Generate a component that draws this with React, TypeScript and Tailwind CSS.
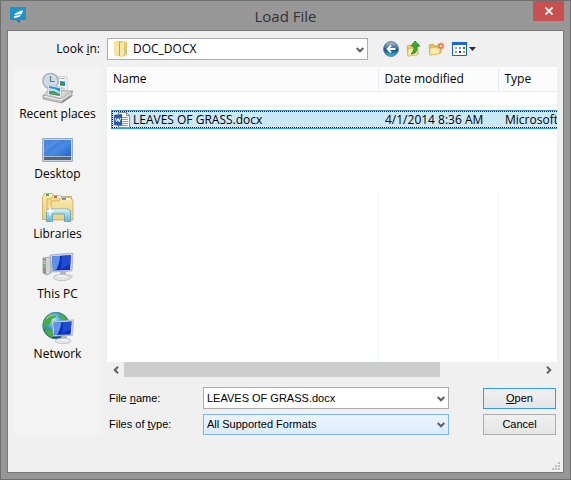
import type { ReactNode } from "react";

const ui = "font-['Open_Sans','Noto_Sans',sans-serif]";
const shell = "font-['Liberation_Sans',Arial,sans-serif]";

function AppLogo() {
  return (
    <svg width="16" height="17" viewBox="0 0 16 17" aria-hidden="true">
      <path d="M0 0h16v13h-6v3l-4-3H0z" fill="#1e93c8" />
      <path d="M6 13h4v3z" fill="#157aaa" />
      <path d="M4 8c1-2 4-3 9-5l-1 4-8 1zM4 9l7-1c-1 2-3 2-7 3z" fill="#fff" />
    </svg>
  );
}

function Chevron({ className = "" }: { className?: string }) {
  return (
    <svg className={className} width="8" height="6" viewBox="0 0 8 6" aria-hidden="true">
      <path d="M.7 1L4 4.300 7.300 1" fill="none" stroke="#606060" strokeWidth="2" />
    </svg>
  );
}

function FolderIcon() {
  return (
    <svg width="14" height="16" viewBox="0 0 14 16" aria-hidden="true">
      <path d="M0 1l6-1 7 1v13l-6 2-7-2z" fill="#e3c163" />
      <path d="M0 1.500L5 1v14l-5-1z" fill="#f6e5a0" />
      <path d="M6 2l4-1v13l-4 2z" fill="#f9e8a5" />
      <path d="M10 1l3 1v12l-3 .5z" fill="#e8c967" />
      <path d="M12.500 9v4" stroke="#92b9b5" />
      <path d="M5.500 1v14" stroke="#cda641" />
    </svg>
  );
}

function BackIcon() {
  return (
    <svg width="16" height="16" viewBox="0 0 16 16" aria-hidden="true">
      <defs>
        <linearGradient id="back" x1="0" y1="0" x2="0" y2="1">
          <stop offset="0" stopColor="#b4c4d4" />
          <stop offset=".4" stopColor="#4a789f" />
          <stop offset=".55" stopColor="#184a7a" />
          <stop offset="1" stopColor="#39c4ee" />
        </linearGradient>
      </defs>
      <circle cx="8" cy="8" r="7.400" fill="url(#back)" stroke="#587998" />
      <path d="M12.500 8H5M8 4.500L4.500 8 8 11.500" fill="none" stroke="#fff" strokeWidth="1.800" />
    </svg>
  );
}

function UpIcon() {
  return (
    <svg width="15" height="16" viewBox="0 0 15 16" aria-hidden="true">
      <path d="M1 5l4-1 1 1 6-1v9L2 15z" fill="#eccb65" stroke="#c7a245" strokeWidth=".7" />
      <path d="M2 8l10-2-1 8-9 1z" fill="#fff0a8" stroke="#d3b150" strokeWidth=".7" />
      <path d="M5 13c2-2 3-4 3-8H5l4-5 5 5h-3c0 5-1 8-6 8z" fill="#39ad36" stroke="#19701d" strokeWidth=".7" />
    </svg>
  );
}

function NewFolderIcon() {
  return (
    <svg width="17" height="16" viewBox="0 0 17 16" aria-hidden="true">
      <path d="M1 4l4-1 1 2 7-1v8L2 14z" fill="#e8bd50" stroke="#cba246" strokeWidth=".7" />
      <path d="M2 7l11-1-2 7-9 1z" fill="#ffebaa" stroke="#d9b553" strokeWidth=".7" />
      <path d="M13 1.500v7M9.500 5h7M10.500 2.500l5 5M15.500 2.500l-5 5" stroke="#e9603a" strokeWidth="1.200" />
      <circle cx="13" cy="5" r="1.500" fill="#ffd49b" />
    </svg>
  );
}

function ViewIcon() {
  return (
    <svg width="25" height="15" viewBox="0 0 25 15" aria-hidden="true">
      <path d="M.5 .5h14v13H.5z" fill="#fff" stroke="#1762bd" />
      <path d="M0 0h15v3H0z" fill="#1768cf" />
      <path d="M3 5h2v2H3z" fill="#a9a9ba" />
      <path d="M7 5h2v2H7z" fill="#8989cc" />
      <path d="M11 5h2v2h-2z" fill="#158621" />
      <path d="M3 9h2v2H3z" fill="#ee7851" />
      <path d="M7 9h2v2H7z" fill="#113b9d" />
      <path d="M11 9h2v2h-2z" fill="#c7a000" />
      <path d="M17 5h7l-3.500 4z" fill="#2d2d2d" />
    </svg>
  );
}

function WordIcon() {
  return (
    <svg width="16" height="16" viewBox="0 0 16 16" aria-hidden="true">
      <path d="M4.500 .5h8l3 3v12h-11z" fill="#fff" stroke="#8b8b8b" />
      <path d="M12.500 .5v3h3" fill="none" stroke="#8b8b8b" />
      <path d="M8 5.500h6M8 7.500h6M8 9.500h6M8 11.500h6M8 13.500h6" stroke="#999" />
      <path d="M0 3l8-1v12l-8-1z" fill="#2b5aa5" />
      <path d="M1.500 6l1 4L4 6.500 5.300 10l1.200-4" fill="none" stroke="#fff" />
    </svg>
  );
}

function RecentIcon() {
  return (
    <svg width="32" height="32" viewBox="0 0 32 32" aria-hidden="true">
      <path d="M12 4l13 1v18l-13-2z" fill="#fafafa" stroke="#b7bcc0" strokeWidth=".7" />
      <path d="M14 6l9 .7M14 9l3 .2M14 11l3 .2M19 16l4 .3M19 18l4 .3" stroke="#adb5b9" />
      <path d="M18 9l5 .5v4l-5-.5z" fill="#298bcc" />
      <path d="M18 12l2-1 3 2v1l-5-.5z" fill="#3c8c43" />
      <circle cx="8.500" cy="9" r="7.500" fill="#d8e4eb" stroke="#a4b5be" strokeWidth="1.700" />
      <circle cx="8.500" cy="9" r="5.600" fill="#cbdce6" />
      <path d="M8.500 4v5.500h4" fill="none" stroke="#6c7c84" strokeWidth="1.200" />
      <path d="M2 23l4-5 25 1-10 11-18-4z" fill="#d5d5d5" stroke="#9a9a9a" strokeWidth=".7" />
      <path d="M6 13l13 2v11L6 23z" fill="#fff" stroke="#b2b9be" strokeWidth=".7" />
      <path d="M7 14l11 2v8L7 22z" fill="#2f91d6" />
      <path d="M7 20l4-1 7 4v1L7 22z" fill="#579a43" />
      <path d="M7 16l6 1 5 3v2l-6-3-5 0z" fill="#b9e2f5" />
      <path d="M1 23l18 4 11-8v5L20 31 1 27z" fill="#c2c2c2" stroke="#858585" strokeWidth=".6" />
      <path d="M2 24l17 4 10-7" fill="none" stroke="#f8f8f8" />
      <path d="M20 30l9-6" stroke="#737373" />
    </svg>
  );
}

function DesktopIcon() {
  return (
    <svg width="32" height="32" viewBox="0 0 32 32" aria-hidden="true">
      <defs>
        <linearGradient id="desk" x1="0" y1="0" x2="1" y2="1">
          <stop offset="0" stopColor="#286bd0" />
          <stop offset=".5" stopColor="#488be5" />
          <stop offset="1" stopColor="#1d56c5" />
        </linearGradient>
      </defs>
      <path d="M.5 6.500h30v23H.5z" fill="#c6d0dc" stroke="#9caab8" />
      <path d="M2 8h27v20H2z" fill="url(#desk)" />
      <path d="M2 8h18C15 11 8 15 2 22z" fill="#7cacf0" opacity=".35" />
      <path d="M2 25h27v3H2z" fill="#51657b" />
      <path d="M2 24.500h27" stroke="#a9bacb" />
    </svg>
  );
}

function LibrariesIcon() {
  return (
    <svg width="32" height="32" viewBox="0 0 32 32" aria-hidden="true">
      <defs>
        <linearGradient id="libraryFolder" x1="0" y1="0" x2="0" y2="1">
          <stop offset="0" stopColor="#fae9ab" />
          <stop offset="1" stopColor="#edcf7c" />
        </linearGradient>
        <linearGradient id="stand" x1="0" y1="0" x2="0" y2="1">
          <stop offset="0" stopColor="#cceefa" />
          <stop offset="1" stopColor="#65b5da" />
        </linearGradient>
      </defs>
      <path d="M.5 5l2-3.500h8l2 3h17v23H.5z" fill="url(#libraryFolder)" stroke="#c9a653" strokeWidth=".8" />
      <path d="M3 2h7v2H3z" fill="#fff" />
      <path d="M4 2h3v2H4z" fill="#35b545" />
      <path d="M5 7h4l2-3.500h8l2 3h9v20H5z" fill="#f5dc91" stroke="#caa34b" strokeWidth=".7" />
      <path d="M11 4h8v2h-8z" fill="#fff" />
      <path d="M12 4h3v2h-3z" fill="#dc563e" />
      <path d="M9 9h8l2-3.500h9l3 3V28H9z" fill="url(#libraryFolder)" stroke="#c9a653" strokeWidth=".8" />
      <path d="M20 6h8v2h-8z" fill="#fff" />
      <path d="M20 6h4v2h-4z" fill="#4fa2df" />
      <path d="M4.500 29.500V20c0-2 1-3 3-3h17c3 0 4 1 4 3v9.500h-6V22h-12v7.500z" fill="url(#stand)" stroke="#579fbe" strokeWidth=".8" />
      <path d="M5.500 20c0-1 1-2 3-2h16" fill="none" stroke="#e8faff" />
      <path d="M8 13l1 5 4 1-4 1-1 5-1-5-4-1 4-1z" fill="#fff" />
    </svg>
  );
}

function Screen() {
  return (
    <>
      <path d="M8 3l23-2-1 18-20 1z" fill="#d1d6dc" stroke="#9aa1aa" strokeWidth=".7" />
      <path d="M10 4.500l19-1.500-1 15-17 .5z" fill="#0d2fc2" />
      <path d="M10 4.500l8-.7c0 6-2 10-4 14.500l-3 .2z" fill="#5e93ec" />
      <path d="M20 3.700L29 3l-.7 9-9.300 5z" fill="#2959d8" opacity=".7" />
      <path d="M18 20l6-.5v4h-6z" fill="#b4b8bd" />
      <ellipse cx="20" cy="25.500" rx="8.500" ry="3.200" fill="#e3e6e8" stroke="#b0b4b8" strokeWidth=".7" />
      <path d="M15 25c3-2 7-1 9 0" fill="none" stroke="#fff" />
    </>
  );
}

function ComputerIcon() {
  return (
    <svg width="32" height="32" viewBox="0 0 32 32" aria-hidden="true">
      <path d="M1 6l8-1v16l-4 2-4-2z" fill="#cfd3d5" stroke="#8b9295" strokeWidth=".7" />
      <path d="M1 6l3 .5V22l-3-1z" fill="#8c9498" />
      <path d="M1.500 9l2 .5M1.500 11l2 .5" stroke="#e5e8e9" />
      <path d="M2 14.500h2" stroke="#5ae440" strokeWidth="2" />
      <ellipse cx="27" cy="24.500" rx="4" ry="2" fill="#d2d4d6" />
      <Screen />
    </svg>
  );
}

function NetworkIcon() {
  return (
    <svg width="32" height="32" viewBox="0 0 32 32" aria-hidden="true">
      <defs>
        <radialGradient id="globe" cx=".4" cy=".3" r=".7">
          <stop offset="0" stopColor="#bdeafb" />
          <stop offset=".45" stopColor="#3b9ad2" />
          <stop offset="1" stopColor="#0b477e" />
        </radialGradient>
      </defs>
      <circle cx="14" cy="13.500" r="13.300" fill="url(#globe)" stroke="#356b8d" strokeWidth=".7" />
      <path d="M2 9c3-5 7-7 10-7l2 3-4 2-2 5-4 2-2 4C1 14 1 11 2 9zM17 1c4 1 7 4 9 8l-5-1-4-3zM4 17l5 1 3 4-2 4c-4-2-7-5-7-8z" fill="#48ad42" />
      <path d="M4 7c3-3 6-4 8-4" fill="none" stroke="#b8e48b" />
      <g transform="translate(2 7) scale(.95 .86)">
        <Screen />
      </g>
    </svg>
  );
}

const places: { name: string; icon: ReactNode }[] = [
  { name: "Recent places", icon: <RecentIcon /> },
  { name: "Desktop", icon: <DesktopIcon /> },
  { name: "Libraries", icon: <LibrariesIcon /> },
  { name: "This PC", icon: <ComputerIcon /> },
  { name: "Network", icon: <NetworkIcon /> },
];

function TitleBar() {
  return (
    <header className="relative flex h-[29px] items-center justify-center">
      <div className="absolute left-[3px] top-[6px]">
        <AppLogo />
      </div>
      <h1 className="text-[15px] leading-5 text-[#333]">Load File</h1>
      <button
        type="button"
        aria-label="Close"
        className="absolute right-0 top-0 flex h-5 w-[31px] items-center justify-center bg-[#c75050]"
      >
        <svg width="8" height="8" viewBox="0 0 8 8" aria-hidden="true">
          <path d="M.5 .5l7 7M7.500 .5l-7 7" stroke="#fff" strokeWidth="1.700" />
        </svg>
      </button>
    </header>
  );
}

function Toolbar() {
  return (
    <div className="flex h-[22px] items-center">
      <label htmlFor="look-in" className="w-[87px] shrink-0 pr-px text-right">
        Look <u>i</u>n:
      </label>
      <div className="relative ml-[6px] h-full w-[261px]">
        <select
          id="look-in"
          className="h-full w-full appearance-none border border-[#abadb3] bg-white pl-[25px] outline-none"
        >
          <option>DOC_DOCX</option>
        </select>
        <span className="pointer-events-none absolute left-[7px] top-[3px]">
          <FolderIcon />
        </span>
        <Chevron className="pointer-events-none absolute right-[4px] top-[9px]" />
      </div>
      <div className="ml-[15px] flex items-center gap-[7px]">
        <button type="button" aria-label="Back"><BackIcon /></button>
        <button type="button" aria-label="Up one level"><UpIcon /></button>
        <button type="button" aria-label="New folder"><NewFolderIcon /></button>
        <button type="button" aria-label="View menu"><ViewIcon /></button>
      </div>
    </div>
  );
}

function FileList() {
  return (
    <div className="flex h-[310px] flex-col">
      <div className="min-h-0 flex-1 overflow-hidden bg-white">
        <table className="h-full w-full table-fixed border-collapse text-left whitespace-nowrap">
          <colgroup>
            <col className="w-[271px]" />
            <col className="w-[120px]" />
            <col />
          </colgroup>
          <thead>
            <tr className="h-6 border-b border-[#e3eefb] bg-[#fcfcfc]">
              <th className="border-r border-[#e3eefb] px-[6px] font-normal">Name</th>
              <th className="border-r border-[#e3eefb] px-[6px] font-normal">Date modified</th>
              <th className="px-[6px] font-normal">Type</th>
            </tr>
          </thead>
          <tbody>
            <tr className="h-[19px]" aria-hidden="true"><td colSpan={3} /></tr>
            <tr className="relative h-[19px]">
              <td className="p-0 pl-[7px]">
                <div className="absolute inset-y-0 left-1 right-0 border border-r-0 border-[#26a0da] bg-[#cbe8f6]">
                  <div className="h-full border border-r-0 border-dotted border-black" />
                </div>
                <div className="relative flex h-[19px] items-center gap-[3px]">
                  <WordIcon />
                  LEAVES OF GRASS.docx
                </div>
              </td>
              <td className="p-0"><span className="relative px-[7px]">4/1/2014 8:36 AM</span></td>
              <td className="overflow-hidden p-0"><span className="relative px-[7px]">Microsoft</span></td>
            </tr>
            <tr className="h-[63px]" aria-hidden="true"><td colSpan={3} /></tr>
            <tr aria-hidden="true">
              <td className="border-r border-[#edf4fd]" />
              <td className="border-r border-[#edf4fd]" />
              <td />
            </tr>
          </tbody>
        </table>
      </div>
      <div className="flex h-[15px] shrink-0 items-center">
        <button type="button" aria-label="Scroll left" className="flex h-full w-[17px] items-center justify-center">
          <Chevron className="rotate-90" />
        </button>
        <div className="h-full flex-1">
          <div className="h-full w-[76%] bg-[#cdcdcd]" />
        </div>
        <button type="button" aria-label="Scroll right" className="flex h-full w-[17px] items-center justify-center">
          <Chevron className="-rotate-90" />
        </button>
      </div>
    </div>
  );
}

function FileForm() {
  return (
    <form className={`mt-[10px] flex flex-col gap-[5px] text-[11px] ${shell}`} onSubmit={(e) => e.preventDefault()}>
      <div className="flex items-center">
        <label htmlFor="file-name" className="w-24 pl-[2px]">File <u>n</u>ame:</label>
        <div className="relative h-[22px] w-[246px]">
          <input
            id="file-name"
            type="text"
            defaultValue="LEAVES OF GRASS.docx"
            className="h-full w-full border border-[#abadb3] bg-white px-[3px] outline-none"
          />
          <Chevron className="pointer-events-none absolute right-[4px] top-[9px]" />
        </div>
        <button type="submit" className="ml-auto mr-px h-[21px] w-[73px] border border-[#3399ff] bg-linear-to-b from-[#f0f0f0] to-[#e5e5e5]">
          <u>O</u>pen
        </button>
      </div>
      <div className="flex items-center">
        <label htmlFor="file-type" className="w-24 pl-[2px]">Files of <u>t</u>ype:</label>
        <div className="relative h-[21px] w-[246px]">
          <select
            id="file-type"
            className="h-full w-full appearance-none border border-[#7eb4ea] bg-linear-to-b from-[#ecf4fc] to-[#dcecfc] px-[3px] outline-none"
          >
            <option>All Supported Formats</option>
          </select>
          <Chevron className="pointer-events-none absolute right-[4px] top-[8px]" />
        </div>
        <button type="button" className="ml-auto mr-px h-[21px] w-[73px] border border-[#acacac] bg-linear-to-b from-[#f0f0f0] to-[#e5e5e5]">
          Cancel
        </button>
      </div>
    </form>
  );
}

export default function App() {
  return (
    <div className={`flex min-h-screen flex-col border border-[#6f6f6f] bg-[#979797] px-[6px] pb-[6px] text-xs text-black ${ui}`}>
      <TitleBar />
      <main className="relative flex-1 border border-[#777] bg-[#f0f0f0] px-[6px] pt-[7px]">
        <Toolbar />
        <div className="mt-[7px] flex gap-[6px]">
          <nav aria-label="Places" className="w-[87px] shrink-0 bg-[#f3f3f3] pt-[5px]">
            {places.map((place) => (
              <a key={place.name} href="#" className="flex h-[60px] flex-col items-center whitespace-nowrap leading-4">
                {place.icon}
                <span className="mt-[2px]">{place.name}</span>
              </a>
            ))}
          </nav>
          <div className="min-w-0 flex-1">
            <FileList />
            <FileForm />
          </div>
        </div>
        <svg className="absolute bottom-[2px] right-[3px]" width="8" height="8" viewBox="0 0 8 8" aria-hidden="true">
          <path d="M6 0h2v2H6zM3 3h2v2H3zM6 3h2v2H6zM0 6h2v2H0zM3 6h2v2H3zM6 6h2v2H6z" fill="#bfbfbf" />
        </svg>
      </main>
    </div>
  );
}
